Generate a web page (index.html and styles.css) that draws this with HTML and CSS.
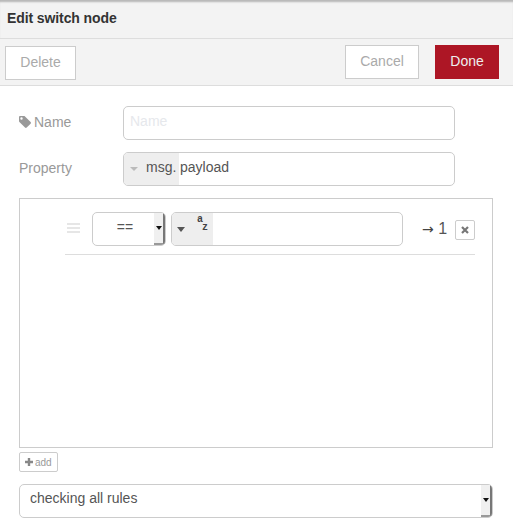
FILE: index.html
```html
<!DOCTYPE html>
<html lang="en">
<head>
    <meta charset="UTF-8">
    <title>Edit switch node</title>
    <link rel="stylesheet" href="styles.css">
</head>
<body>

<div class="tray">
    <div class="tray-title">Edit switch node</div>
    <div class="tray-toolbar">
        <a class="btn btn-delete">Delete</a>
        <div class="toolbar-right">
            <a class="btn btn-cancel">Cancel</a>
            <a class="btn btn-done">Done</a>
        </div>
    </div>

    <div class="tray-body">
        <div class="form-row">
            <label class="form-label">
                <svg class="icon-tag" width="14" height="14" viewBox="0 0 14 14"><path fill="#999" fill-rule="evenodd" d="M1 2.2C1 1.5 1.5 1 2.2 1H6c.4 0 .7.1 1 .4l5.6 5.6c.5.5.5 1.200 0 1.700l-3.900 3.900c-.5.5-1.200.5-1.700 0L1.400 7C1.100 6.700 1 6.400 1 6zM3.500 2.300a1.200 1.200 0 1 0 0 2.400 1.200 1.200 0 0 0 0-2.400z"/></svg>Name
            </label>
            <div class="input input-name">Name</div>
        </div>

        <div class="form-row">
            <label class="form-label">Property</label>
            <div class="input input-typed">
                <div class="typed-prefix">
                    <span class="caret caret-light"></span>
                    <span class="typed-msg">msg.</span>
                </div>
                <span class="typed-value">payload</span>
            </div>
        </div>

        <div class="rules-box">
            <div class="rule-row">
                <div class="handle"><i></i><i></i><i></i></div>
                <div class="select select-op">
                    <span class="select-text">==</span>
                    <span class="select-arrow"><span class="caret-small"></span></span>
                </div>
                <div class="input-type">
                    <div class="type-prefix">
                        <span class="caret caret-dark"></span>
                        <span class="az"><b>a</b><b>z</b></span>
                    </div>
                </div>
                <div class="rule-output"><span class="rule-arrow">→</span> 1</div>
                <a class="rule-remove">
                    <svg width="8" height="8" viewBox="0 0 8 8"><path stroke="#777" stroke-width="2.200" d="M1 1l6 6M7 1L1 7"/></svg>
                </a>
            </div>
        </div>

        <a class="btn-add">
            <svg width="8" height="8" viewBox="0 0 8 8"><path stroke="#888" stroke-width="2.400" d="M4 0v8M0 4h8"/></svg>add
        </a>

        <div class="select select-rules">
            <span class="select-text">checking all rules</span>
            <span class="select-arrow"><span class="caret-small"></span></span>
        </div>
    </div>
</div>

</body>
</html>
```
FILE: styles.css
```css
* {
    box-sizing: border-box;
}
body {
    font-family: "Liberation Sans", Arial, sans-serif;
    font-size: 14px;
    color: #555;
    background: #fff;
    margin: 0;
    padding: 0;
    overflow: hidden;
}
.tray {
    width: 513px;
    height: 523px;
}
.tray-title {
    height: 39px;
    padding: 10px 0 0 7px;
    font-weight: bold;
    line-height: 16px;
    letter-spacing: -0.1px;
    color: #333;
    background: #f3f3f3;
    border-bottom: 1px solid #ddd;
    box-shadow: inset 0 3px 2px -1px rgba(0, 0, 0, 0.25);
}
.tray-toolbar {
    height: 47px;
    display: flex;
    justify-content: space-between;
    padding: 6px 14px 0 5px;
    background: #f3f3f3;
    border-bottom: 1px solid #ddd;
}
.toolbar-right {
    display: flex;
    gap: 16px;
}
.btn {
    display: block;
    height: 34px;
    line-height: 30px;
    text-align: center;
    color: #aaa;
    background: #fff;
    border: 1px solid #ccc;
}
.btn-delete {
    width: 71px;
    margin-top: 1px;
}
.btn-cancel {
    width: 74px;
}
.btn-done {
    width: 64px;
    color: #eee;
    background: #ad1625;
    border-color: #ad1625;
}
.tray-body {
    padding: 20px 20px 0 19px;
}
.form-row {
    display: flex;
    align-items: center;
    height: 34px;
    margin-bottom: 12px;
}
.form-label {
    width: 104px;
    display: flex;
    align-items: center;
    margin-top: -2px;
    color: #999;
}
.icon-tag {
    margin-left: -1px;
    margin-right: 2px;
}
.input {
    width: 332px;
    height: 34px;
    background: #fff;
    border: 1px solid #ccc;
    border-radius: 5px;
}
.input-name {
    padding: 0 6px;
    line-height: 28px;
    color: #e6e8ec;
}
.input-typed {
    display: flex;
    align-items: center;
    overflow: hidden;
}
.typed-prefix {
    width: 55px;
    height: 100%;
    display: flex;
    align-items: center;
    background: #eee;
    padding-left: 5px;
}
.typed-msg {
    margin-left: 7px;
    margin-top: -5px;
}
.typed-value {
    margin-left: 1px;
    margin-top: -5px;
}
.caret {
    width: 0;
    height: 0;
    border-left: 4px solid transparent;
    border-right: 4px solid transparent;
    margin-left: 1px;
    margin-right: 1px;
}
.caret-light {
    border-top: 4px solid #bbb;
}
.caret-dark {
    border-top: 5px solid #555;
}
.rules-box {
    width: 474px;
    height: 250px;
    border: 1px solid #ccc;
    padding: 13px 17px 0 45px;
}
.rule-row {
    display: flex;
    align-items: flex-start;
    height: 43px;
    border-bottom: 1px solid #ddd;
}
.handle {
    width: 27px;
    padding: 11px 0 0 2px;
}
.handle i {
    display: block;
    width: 13px;
    height: 2px;
    margin-bottom: 2px;
    background: #e6e6e6;
}
.select {
    position: relative;
    height: 34px;
    background: #fff;
    border: 1px solid #ccc;
    border-radius: 5px;
    overflow: hidden;
}
.select-op {
    width: 74px;
    margin-right: 5px;
}
.select-op .select-text {
    display: block;
    width: 64px;
    text-align: center;
    line-height: 28px;
}
.select-arrow {
    position: absolute;
    top: 0;
    right: 0;
    bottom: 0;
    width: 11px;
    background: #f0f0f0;
    border-right: 2px solid #777;
    border-bottom: 2px solid #999;
    display: flex;
    align-items: center;
    justify-content: center;
}
.caret-small {
    width: 0;
    height: 0;
    border-left: 3px solid transparent;
    border-right: 3px solid transparent;
    border-top: 4px solid #111;
}
.input-type {
    width: 232px;
    height: 34px;
    background: #fff;
    border: 1px solid #ccc;
    border-radius: 5px;
    overflow: hidden;
}
.type-prefix {
    width: 41px;
    height: 100%;
    display: flex;
    align-items: center;
    background: #eee;
    padding-left: 4px;
}
.az {
    width: 12px;
    margin: -11px 0 0 11px;
    display: flex;
    flex-direction: column;
    font-family: "Liberation Mono", monospace;
    font-size: 10px;
    line-height: 8px;
    color: #444;
}
.az b:last-child {
    margin-left: 5px;
}
.rule-output {
    width: 52px;
    padding-left: 19px;
    line-height: 34px;
    white-space: nowrap;
    font-size: 16px;
}
.rule-arrow {
    font-family: "DejaVu Sans", sans-serif;
    font-size: 14px;
    color: #444;
}
.rule-remove {
    display: flex;
    align-items: center;
    justify-content: center;
    width: 20px;
    height: 20px;
    margin-top: 8px;
    border: 1px solid #ccc;
    border-radius: 2px;
}
.btn-add {
    display: flex;
    align-items: center;
    width: 39px;
    height: 20px;
    margin-top: 4px;
    padding-left: 5px;
    font-size: 10px;
    color: #999;
    border: 1px solid #ccc;
    border-radius: 2px;
}
.btn-add svg {
    margin-right: 2px;
}
.select-rules {
    width: 474px;
    margin-top: 12px;
}
.select-rules .select-text {
    display: block;
    padding-left: 10px;
    line-height: 27px;
}
```
